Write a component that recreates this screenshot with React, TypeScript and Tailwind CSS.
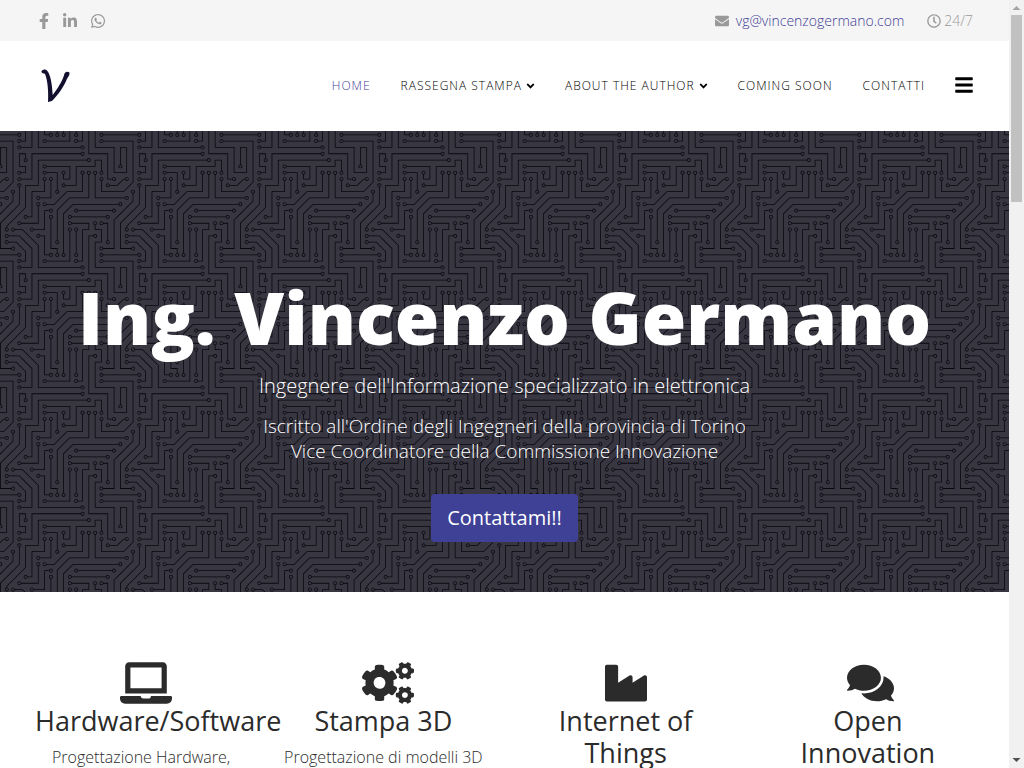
import React from "react";
import {
  FaAngleDown,
  FaBars,
  FaCogs,
  FaComments,
  FaEnvelope,
  FaFacebookF,
  FaIndustry,
  FaLaptop,
  FaLinkedinIn,
  FaRegClock,
  FaWhatsapp,
} from "react-icons/fa";

const MENU = [
  { label: "Home", active: true },
  { label: "Rassegna Stampa", dropdown: true },
  { label: "About the author", dropdown: true },
  { label: "Coming soon" },
  { label: "Contatti" },
];

const FEATURES = [
  { title: "Hardware/Software", text: "Progettazione Hardware,", Icon: FaLaptop, size: "w-[52px]" },
  { title: "Stampa 3D", text: "Progettazione di modelli 3D", Icon: FaCogs, size: "w-[52px]" },
  { title: "Internet of\nThings", text: "", Icon: FaIndustry, size: "w-[42px]" },
  { title: "Open\nInnovation", text: "", Icon: FaComments, size: "w-[47px]" },
];

// Circuit traces, one 304x304 tile
const TRACES =
  "M44.1 224a5 5 0 1 1 0 2H0v-2h44.1zm160 48a5 5 0 1 1 0 2H82v-2h122.1zm57.8-46a5 5 0 1 1 0-2H304v2h-42.1zm0 16a5 5 0 1 1 0-2H304v2h-42.1zm6.2-114a5 5 0 1 1 0 2h-86.2a5 5 0 1 1 0-2h86.2zm-256-48a5 5 0 1 1 0 2H0v-2h12.1zm185.8 34a5 5 0 1 1 0-2h86.2a5 5 0 1 1 0 2h-86.2zM258 12.1a5 5 0 1 1-2 0V0h2v12.1zm-64 208a5 5 0 1 1-2 0v-54.2a5 5 0 1 1 2 0v54.2zm48-198.2V80h62v2h-64V21.9a5 5 0 1 1 2 0zm16 16V64h46v2h-48V37.9a5 5 0 1 1 2 0zm-128 96V208h16v12.1a5 5 0 1 1-2 0V210h-16v-76.1a5 5 0 1 1 2 0zm-5.9-21.9a5 5 0 1 1 0 2H114v48H85.9a5 5 0 1 1 0-2H112v-48h12.1zm-6.2 130a5 5 0 1 1 0-2H176v-74.1a5 5 0 1 1 2 0V242h-60.1zm-16-64a5 5 0 1 1 0-2H114v48h10.1a5 5 0 1 1 0 2H112v-48h-10.1zM66 284.1a5 5 0 1 1-2 0V274H50v30h-2v-32h18v12.1zM236.1 176a5 5 0 1 1 0 2H226v94h48v32h-2v-30h-48v-98h12.1zm25.8-30a5 5 0 1 1 0-2H274v44.1a5 5 0 1 1-2 0V146h-10.1zm-64 96a5 5 0 1 1 0-2H208v-80h16v-14h-42.1a5 5 0 1 1 0-2H226v18h-16v80h-12.1zm86.2-210a5 5 0 1 1 0 2H272V0h2v32h10.1zM98 101.9V146H53.9a5 5 0 1 1 0-2H96v-42.1a5 5 0 1 1 2 0zM53.9 34a5 5 0 1 1 0-2H80V0h2v34H53.9zm60.1 3.9V66H82v64H69.9a5 5 0 1 1 0-2H80V64h32V37.9a5 5 0 1 1 2 0zM101.9 82a5 5 0 1 1 0-2H128V37.9a5 5 0 1 1 2 0V82h-28.1zm16-64a5 5 0 1 1 0-2H146v44.1a5 5 0 1 1-2 0V18h-26.1zm102.2 270a5 5 0 1 1 0 2H98v14h-2v-16h124.1zM242 149.9V160h16v34h-16v62h48v48h-2v-46h-48v-66h16v-30h-16v-12.1a5 5 0 1 1 2 0zM53.9 18a5 5 0 1 1 0-2H64V2H48V0h18v18H53.9zm112 32a5 5 0 1 1 0-2H192V0h50v2h-48v48h-28.1zm-48-48a5 5 0 0 1-9.8-2h2.07a3 3 0 1 0 5.66 0H178v34h-18V21.9a5 5 0 1 1 2 0V32h14V2h-58.1zm0 96a5 5 0 1 1 0-2H137l32-32h39V21.9a5 5 0 1 1 2 0V66h-40.17l-32 32H117.9zm28.1 90.1a5 5 0 1 1-2 0v-76.51L175.59 80H224V21.9a5 5 0 1 1 2 0V82h-49.59L146 112.41v75.69zm16 32a5 5 0 1 1-2 0v-99.51L184.59 96H300.1a5 5 0 0 1 3.9-3.9v2.07a3 3 0 0 0 0 5.66v2.07a5 5 0 0 1-3.9-3.9H185.41L162 121.41v98.69zm-144-64a5 5 0 1 1-2 0v-3.51l48-48V48h32V0h2v50H66v55.41l-48 48v2.69zM50 53.9v43.51l-48 48V208h26.1a5 5 0 1 1 0 2H0v-65.41l48-48V53.9a5 5 0 1 1 2 0zm-16 16V89.41l-34 34v-2.82l32-32V69.9a5 5 0 1 1 2 0zM12.1 32a5 5 0 1 1 0 2H9.41L0 43.41V40.6L8.59 32h3.51zm265.8 18a5 5 0 1 1 0-2h18.69l7.41-7.41v2.82L297.41 50H277.9zm-16 160a5 5 0 1 1 0-2H288v-71.41l16-16v2.82l-14 14V210h-28.1zm-208 32a5 5 0 1 1 0-2H64v-22.59L40.59 194H21.9a5 5 0 1 1 0-2H41.41L66 216.59V242H53.9zm150.2 14a5 5 0 1 1 0 2H96v-56.6L56.6 162H37.9a5 5 0 1 1 0-2h19.5L98 200.6V256h106.1zm-150.2 2a5 5 0 1 1 0-2H80v-46.59L48.59 178H21.9a5 5 0 1 1 0-2H49.41L82 208.59V258H53.9zM34 39.8v1.61L9.41 66H0v-2h8.59L32 40.59V0h2v39.8zM2 300.1a5 5 0 0 1 3.9 3.9H3.83A3 3 0 0 0 0 302.17V256h18v48h-2v-46H2v42.1zM34 241v63h-2v-62H0v-2h34v1zM17 18H0v-2h16V0h2v18h-1zm273-2h14v2h-16V0h2v16zm-32 273v15h-2v-14h-14v14h-2v-16h18v1zM0 92.1A5.02 5.02 0 0 1 6 97a5 5 0 0 1-6 4.9v-2.07a3 3 0 1 0 0-5.66V92.1zM80 272h2v32h-2v-32zm37.9 32h-2.07a3 3 0 0 0-5.66 0h-2.07a5 5 0 0 1 9.8 0zM5.9 0A5.02 5.02 0 0 1 0 5.9V3.83A3 3 0 0 0 3.83 0H5.9zm294.2 0h2.07A3 3 0 0 0 304 3.83V5.9a5 5 0 0 1-3.9-5.9zm3.9 300.1v2.07a3 3 0 0 0-1.83 1.83h-2.07a5 5 0 0 1 3.9-3.9z";

// Centres of the solder pads
const PADS = [
  [49, 225], [209, 273], [257, 225], [257, 241], [273, 129], [177, 129], [17, 81], [193, 113],
  [289, 113], [257, 17], [193, 225], [193, 161], [241, 17], [257, 33], [129, 129], [145, 225],
  [129, 113], [81, 161], [113, 241], [177, 161], [97, 177], [129, 225], [65, 289], [241, 177],
  [257, 145], [273, 193], [193, 241], [177, 145], [289, 33], [97, 97], [49, 145], [49, 33],
  [113, 33], [65, 129], [97, 81], [129, 33], [113, 17], [145, 65], [225, 289], [241, 145],
  [49, 17], [161, 49], [161, 17], [113, 97], [209, 17], [145, 193], [225, 17], [161, 225],
  [17, 161], [49, 49], [33, 209], [33, 65], [17, 33], [273, 49], [257, 209], [49, 241],
  [17, 193], [209, 257], [33, 161], [49, 257], [17, 177],
];

function CircuitBackground() {
  return (
    <svg className="absolute inset-0 h-full w-full" aria-hidden="true">
      <defs>
        <pattern id="circuit" width="120" height="120" y="35" patternUnits="userSpaceOnUse" viewBox="0 0 304 304">
          <path d={TRACES} fill="#07070f" />
          {PADS.map(([x, y]) => (
            <circle key={`${x}-${y}`} cx={x} cy={y} r="3" fill="#383641" />
          ))}
        </pattern>
      </defs>
      <rect width="100%" height="100%" fill="url(#circuit)" />
    </svg>
  );
}

function Logo() {
  return (
    <svg viewBox="120 204 90 108" className="h-9 w-[30px]" aria-hidden="true">
      <path
        d="M124 215C127 207 137 207 142 213C150 222 156 245 158 285C172 268 187 243 192 226C193 217 200 213 208 217C210 224 206 230 201 236C191 262 173 285 156 303L144 306C146 275 143 240 135 222C132 219 128 222 124 215Z"
        fill="#12102e"
      />
    </svg>
  );
}

function Scrollbar() {
  return (
    <div className="flex w-[15px] shrink-0 flex-col items-center bg-[#f1f1f1]" aria-hidden="true">
      <svg viewBox="0 0 15 15" className="h-[15px] w-[15px]">
        <path d="M3.500 10L7.500 6L11.500 10Z" fill="#a3a3a3" />
      </svg>
      <div className="h-[187px] w-[11px] bg-[#c1c1c1]" />
      <svg viewBox="0 0 15 15" className="mt-auto h-[15px] w-[15px]">
        <path d="M3.500 5L7.500 9L11.500 5Z" fill="#505050" />
      </svg>
    </div>
  );
}

export default function App() {
  return (
    <div className="flex h-screen overflow-hidden bg-white font-['Open_Sans',sans-serif] font-light text-[#2b2b2b]">
      <div className="min-w-0 flex-1 overflow-hidden">
        {/* Top bar */}
        <div className="flex h-[41px] items-center justify-between bg-[#f5f5f5] pr-9 pl-[39px] text-sm text-[#999999]">
          <div className="flex items-center gap-3.5">
            <a href="#facebook" aria-label="Facebook"><FaFacebookF className="h-4 w-2.5" /></a>
            <a href="#linkedin" aria-label="LinkedIn"><FaLinkedinIn className="h-4 w-3.5" /></a>
            <a href="#whatsapp" aria-label="WhatsApp"><FaWhatsapp className="h-4 w-3.5" /></a>
          </div>
          <div className="flex items-center gap-[23px]">
            <div className="flex items-center gap-[7px]">
              <FaEnvelope className="h-3.5 w-3.5" />
              <a href="mailto:vg@vincenzogermano.com" className="text-[#3f4197]">vg@vincenzogermano.com</a>
            </div>
            <div className="flex items-center gap-[3px]">
              <FaRegClock className="h-3.5 w-3.5" />
              <span>24/7</span>
            </div>
          </div>
        </div>

        {/* Header */}
        <header className="flex h-[90px] items-center justify-between pr-9 pl-10">
          <a href="#home" aria-label="Home"><Logo /></a>
          <div className="flex items-center gap-[30px]">
            <nav className="flex items-center gap-[30px] text-xs tracking-[1px] text-black uppercase">
              {MENU.map(({ label, active, dropdown }) => (
                <a key={label} href="#menu" className={active ? "text-[#3f4197]" : "flex items-center gap-1"}>
                  {label}
                  {dropdown && <FaAngleDown className="h-3 w-[9px]" />}
                </a>
              ))}
            </nav>
            <button aria-label="Menu" className="pb-0.5 text-black"><FaBars className="h-5 w-[18px]" /></button>
          </div>
        </header>

        {/* Hero */}
        <section className="relative h-[461px] bg-[#383641]">
          <CircuitBackground />
          <div className="relative flex flex-col items-center pt-[143px] text-center text-white">
            <h1 className="text-[72px] leading-[86px] font-extrabold">Ing. Vincenzo Germano</h1>
            <h2 className="mt-3 text-xl leading-7">Ingegnere dell'Informazione specializzato in elettronica</h2>
            <p className="mt-3.5 text-[19px] leading-[25px]">
              Iscritto all'Ordine degli Ingegneri della provincia di Torino
              <br />
              Vice Coordinatore della Commissione Innovazione
            </p>
            <button className="mt-[30px] h-12 rounded bg-[#3f4197] px-4 text-xl font-normal">Contattami!!</button>
          </div>
        </section>

        {/* Features */}
        <section className="grid grid-cols-4 px-5 pt-[70px]">
          {FEATURES.map(({ title, text, Icon, size }) => (
            <div key={title} className="flex flex-col px-[15px] text-center">
              <div className="mb-px flex h-[42px] w-[42px] self-center">
                <Icon className={`h-[42px] shrink-0 ${size}`} />
              </div>
              <h3 className="text-[27px] leading-8 font-normal whitespace-pre-line">{title}</h3>
              {text && <p className="mt-2 text-base leading-6">{text}</p>}
            </div>
          ))}
        </section>
      </div>
      <Scrollbar />
    </div>
  );
}
